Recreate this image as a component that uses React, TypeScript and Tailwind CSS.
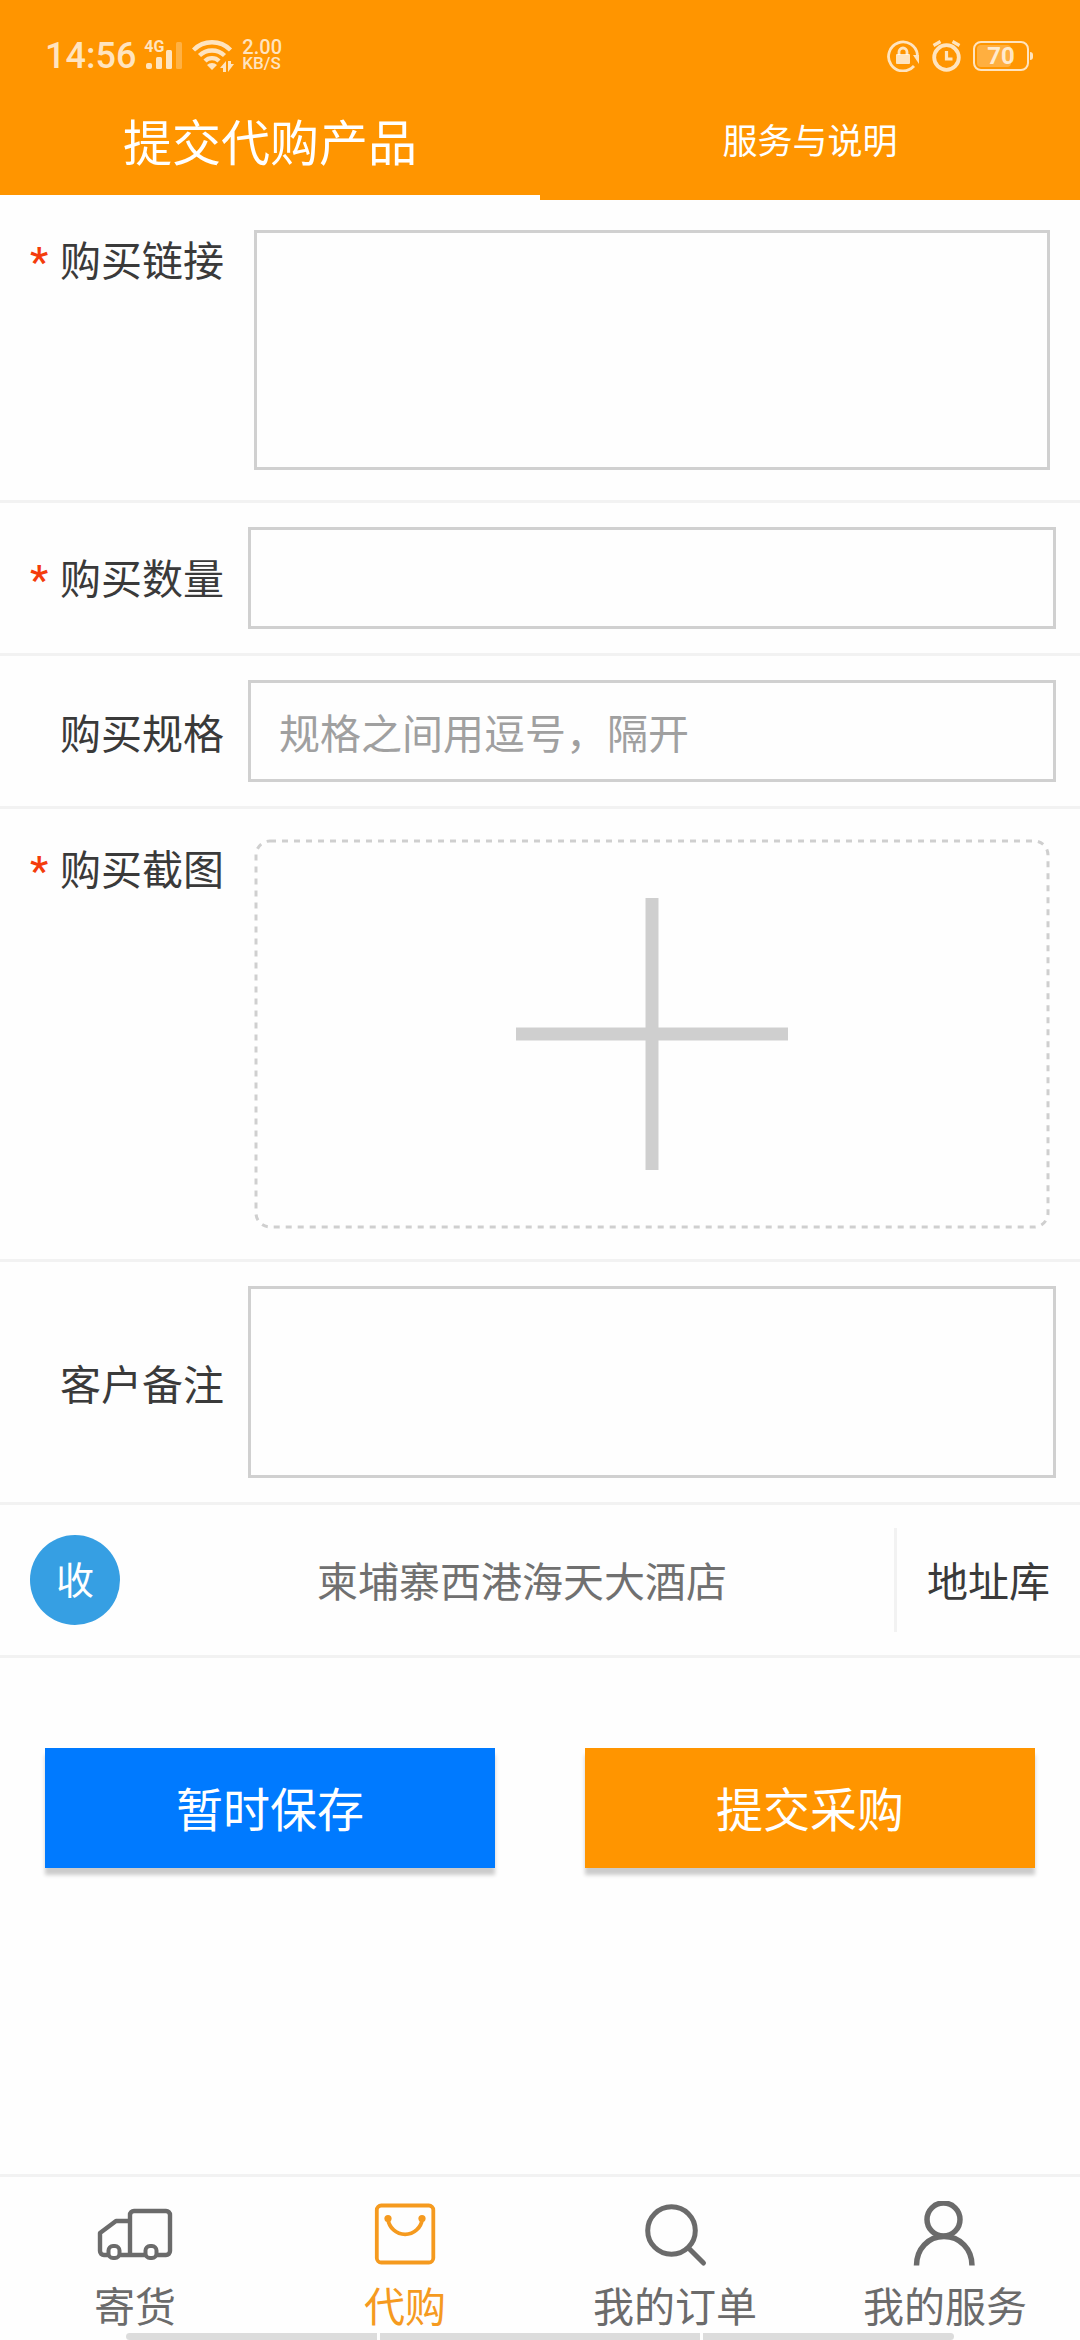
import React, { useState } from "react";

const TruckIcon = () => (
  <svg className="h-[68px] w-[76px]" viewBox="0 0 76 68" fill="none" stroke="currentColor" strokeWidth="4.4" strokeLinejoin="round" aria-hidden="true">
    <path d="M33 54V14a4 4 0 0 1 4-4h32a4 4 0 0 1 4 4v36a4 4 0 0 1-4 4H7a4 4 0 0 1-4-4V32l16-12h14" />
    <rect x="11.5" y="45" width="11" height="12" rx="4.5" fill="white" strokeWidth="4" />
    <rect x="48.5" y="45" width="11" height="12" rx="4.5" fill="white" strokeWidth="4" />
  </svg>
);

const BagIcon = () => (
  <svg className="h-[68px] w-[76px]" viewBox="0 0 76 68" fill="none" stroke="currentColor" strokeWidth="3.8" aria-hidden="true">
    <rect x="9.8" y="4.5" width="56.5" height="57" rx="4.5" />
    <path d="M21 18a17.2 17.2 0 0 0 34.2 0" />
    <circle cx="21" cy="17.5" r="3.6" fill="currentColor" stroke="none" />
    <circle cx="55" cy="17.5" r="3.6" fill="currentColor" stroke="none" />
  </svg>
);

const SearchIcon = () => (
  <svg className="h-[68px] w-[76px]" viewBox="0 0 76 68" fill="none" stroke="currentColor" strokeWidth="5" strokeLinecap="round" aria-hidden="true">
    <circle cx="34.5" cy="29.5" r="23.8" />
    <path d="M51.5 47 66.5 62" />
  </svg>
);

const UserIcon = () => (
  <svg className="h-[68px] w-[76px]" viewBox="0 0 76 68" fill="none" stroke="currentColor" strokeWidth="5.5" aria-hidden="true">
    <circle cx="36.5" cy="18.5" r="16.5" />
    <path d="M9.5 64.5C9.5 48 21 35.5 37 35.5S65 48 65 64.5" />
  </svg>
);

const NAV_ITEMS = [
  { label: "寄货", icon: TruckIcon },
  { label: "代购", icon: BagIcon },
  { label: "我的订单", icon: SearchIcon },
  { label: "我的服务", icon: UserIcon },
];

const StatusBar = () => (
  <div className="flex h-[84px] items-center justify-between pt-[28px] pr-[47px] pl-[45px] font-['Roboto',sans-serif] text-white/75">
    <div className="flex items-center">
      <span className="text-[36px] leading-[36px] font-medium">14:56</span>
      <div className="ml-2 flex flex-col items-start">
        <span className="text-[16px] leading-[12px] font-bold">4G</span>
        <svg className="-mt-3 h-[30px] w-[40px]" viewBox="0 0 40 30" fill="currentColor" aria-hidden="true">
          <rect x="2" y="22" width="6" height="6" rx="2" />
          <rect x="12" y="16" width="6" height="12" rx="1.5" />
          <rect x="22" y="9" width="6" height="19" rx="1.5" />
          <rect x="32" y="1" width="6" height="27" rx="1.5" opacity="0.35" />
        </svg>
      </div>
      <svg className="ml-2 h-[32px] w-[44px]" viewBox="0 0 44 32" fill="none" stroke="currentColor" strokeWidth="4.4" aria-hidden="true">
        <path d="M1.5 10a26 26 0 0 1 37 0" />
        <path d="M7.5 15.5a18 18 0 0 1 25 0" />
        <path d="M13 21a10 10 0 0 1 14 0" />
        <path d="M15 25a7 7 0 0 1 10 0l-5 5z" fill="currentColor" stroke="none" />
        <path d="M28 28l6-7v11h-3v-4zM36 21v11l6-8h-3v-3z" fill="currentColor" stroke="none" />
      </svg>
      <div className="ml-[6px] flex flex-col pb-[2px] font-medium">
        <span className="text-[20px] leading-[16px]">2.00</span>
        <span className="text-[17px] leading-[16px]">KB/S</span>
      </div>
    </div>
    <div className="flex items-center gap-3">
      <svg className="h-[32px] w-[33px]" viewBox="0 0 33 32" fill="none" stroke="currentColor" strokeWidth="2.8" aria-hidden="true">
        <path d="M27 26A14.500 14.500 0 1 1 30.500 15" />
        <path d="M32 24l-6-9h6z" fill="currentColor" stroke="none" />
        <rect x="9" y="14" width="14" height="10" rx="1" fill="currentColor" stroke="none" />
        <path d="M12 15v-3a4 4 0 0 1 8 0v3" />
      </svg>
      <svg className="h-[32px] w-[29px]" viewBox="0 0 29 32" fill="none" stroke="currentColor" strokeWidth="3.8" aria-hidden="true">
        <circle cx="14.5" cy="17.5" r="12.3" />
        <path d="M14.5 11v8h6M1.5 5.5l7-4M27.5 5.5l-7-4" strokeWidth="3.2" />
      </svg>
      <div className="flex items-center gap-px">
        <div className="relative flex h-[30px] w-[56px] items-center justify-center rounded-lg border-2 border-current">
          <div className="absolute inset-y-[2px] left-[2px] w-[34px] rounded bg-white/25" />
          <span className="text-[24px] leading-[26px] font-bold">70</span>
        </div>
        <div className="h-[8px] w-[3px] rounded-r bg-current" />
      </div>
    </div>
  </div>
);

const Field = ({ id, label, required, top, children }: { id: string; label: string; required?: boolean; top?: boolean; children: React.ReactNode }) => (
  <div className={`flex border-b-3 border-[#f2f2f2] pl-[30px] ${top ? "items-start py-[30px] pr-[30px]" : "items-center py-[24px] pr-[24px]"}`}>
    <label htmlFor={id} className={`flex shrink-0 items-baseline leading-[56px] text-[#3a3a3a] ${top ? "w-[224px]" : "w-[218px]"}`}>
      <span className="w-[30px] font-['Roboto',sans-serif] font-medium text-[#f43c0b]">{required && "*"}</span>
      {label}
    </label>
    {children}
  </div>
);

export default function App() {
  const [tab, setTab] = useState("提交代购产品");
  const [page, setPage] = useState("代购");
  const [form, setForm] = useState({ link: "", count: "", spec: "", remark: "" });

  const handleChange = (e: React.ChangeEvent<HTMLInputElement | HTMLTextAreaElement>) => {
    setForm({ ...form, [e.target.name]: e.target.value });
  };

  return (
    <div className="flex min-h-screen flex-col bg-[#fefefe] font-['Noto_Sans_CJK_SC',sans-serif] text-[41px]">
      <header className="bg-[#ff9500]">
        <StatusBar />
        <div className="grid grid-cols-2 text-white">
          {["提交代购产品", "服务与说明"].map((name) => (
            <button
              key={name}
              type="button"
              onClick={() => setTab(name)}
              className={`h-[116px] border-b-5 ${tab === name ? "border-white text-[49px]" : "border-transparent text-[35px]"}`}
            >
              {name}
            </button>
          ))}
        </div>
      </header>

      <form onSubmit={(e) => e.preventDefault()}>
        <Field id="link" label="购买链接" required top>
          <textarea id="link" name="link" value={form.link} onChange={handleChange} className="h-[240px] min-w-0 flex-1 resize-none border-3 border-[#d0d0d0] px-7 outline-none" />
        </Field>
        <Field id="count" label="购买数量" required>
          <input id="count" name="count" value={form.count} onChange={handleChange} className="h-[102px] min-w-0 flex-1 border-3 border-[#d0d0d0] px-7 outline-none" />
        </Field>
        <Field id="spec" label="购买规格">
          <input id="spec" name="spec" value={form.spec} onChange={handleChange} placeholder="规格之间用逗号，隔开" className="h-[102px] min-w-0 flex-1 border-3 border-[#d0d0d0] px-7 outline-none placeholder:text-[#a0a0a0]" />
        </Field>
        <Field id="shot" label="购买截图" required top>
          <button id="shot" type="button" className="relative flex h-[390px] min-w-0 flex-1 items-center justify-center text-[#cfcfcf]">
            <svg className="absolute inset-0 h-full w-full overflow-visible p-[2px]" fill="none" stroke="currentColor" strokeWidth="3" strokeDasharray="6 6" aria-hidden="true">
              <rect width="100%" height="100%" rx="14" />
            </svg>
            <svg className="h-[272px] w-[272px]" viewBox="0 0 272 272" stroke="currentColor" strokeWidth="13" aria-hidden="true">
              <path d="M136 0v272M0 136h272" />
            </svg>
          </button>
        </Field>
        <Field id="remark" label="客户备注">
          <textarea id="remark" name="remark" value={form.remark} onChange={handleChange} className="h-[192px] min-w-0 flex-1 resize-none border-3 border-[#d0d0d0] px-7 outline-none" />
        </Field>

        <div className="flex h-[153px] items-center border-b-3 border-[#f2f2f2] px-[30px]">
          <span className="flex h-[90px] w-[90px] items-center justify-center rounded-full bg-[#369fe3] pb-1 text-[38px] leading-[48px] text-white">收</span>
          <span className="ml-[30px] flex-1 text-center text-[#707070]">柬埔寨西港海天大酒店</span>
          <button type="button" className="h-[104px] border-l-3 border-[#f2f2f2] pl-[30px] text-[#3a3a3a]">地址库</button>
        </div>

        <div className="grid grid-cols-2 gap-[90px] px-[45px] py-[90px] text-[47px] text-white">
          <button type="button" className="h-[120px] bg-[#007aff] pb-[2px] shadow-[0_7px_4px_rgba(0,0,0,0.2)]">暂时保存</button>
          <button type="submit" className="h-[120px] bg-[#ff9500] pb-[2px] shadow-[0_7px_4px_rgba(0,0,0,0.2)]">提交采购</button>
        </div>
      </form>

      <footer className="mt-auto border-t-3 border-[#f2f2f2] pt-[24px]">
        <nav className="grid grid-cols-4">
          {NAV_ITEMS.map(({ label, icon: Icon }) => (
            <button
              key={label}
              type="button"
              onClick={() => setPage(label)}
              className={`flex flex-col items-center gap-[11px] leading-[48px] ${page === label ? "text-[#f59a1f]" : "text-[#6b6b6b]"}`}
            >
              <Icon />
              {label}
            </button>
          ))}
        </nav>
        {/* gesture bar */}
        <div className="mt-[5px] grid h-[7px] grid-cols-[11fr_14fr_11fr] gap-[3px] px-[126px]">
          <div className="rounded-l bg-[#dcdcdc]" />
          <div className="bg-[#dcdcdc]" />
          <div className="rounded-r bg-[#dcdcdc]" />
        </div>
      </footer>
    </div>
  );
}
